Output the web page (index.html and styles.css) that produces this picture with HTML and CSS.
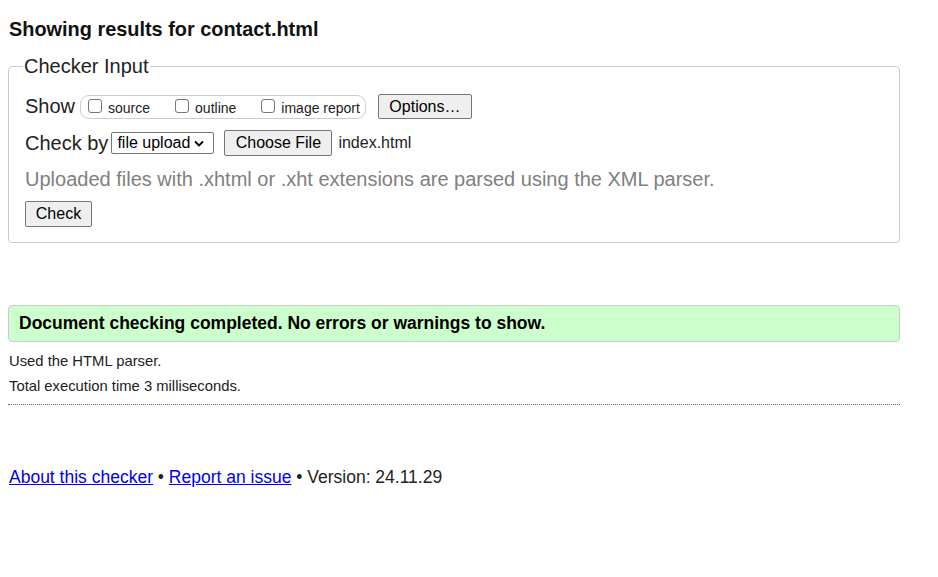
FILE: index.html
```html
<!DOCTYPE html>
<html>
<head>
<meta charset="utf-8">
<link rel="stylesheet" href="styles.css">
</head>
<body>
<div class="page">
  <h2 class="title">Showing results for contact.html</h2>
  <fieldset class="input">
    <legend class="legend">Checker Input</legend>
    <div class="row show-row">
      <span class="label">Show</span>
      <span class="group">
        <label class="opt"><span class="cb"></span>source</label>
        <label class="opt"><span class="cb"></span>outline</label>
        <label class="opt"><span class="cb"></span>image report</label>
      </span>
      <button class="btn btn-options">Options…</button>
    </div>
    <div class="row by-row">
      <span class="label">Check by</span>
      <span class="select">file upload<svg class="chev" width="10" height="7" viewBox="0 0 10 7"><path d="M1 1.5 L5 5.5 L9 1.5" fill="none" stroke="#000" stroke-width="1.8"/></svg></span>
      <button class="btn btn-file">Choose File</button>
      <span class="fname">index.html</span>
    </div>
    <p class="hint">Uploaded files with .xhtml or .xht extensions are parsed using the XML parser.</p>
    <button class="btn btn-check">Check</button>
  </fieldset>

  <div class="success">Document checking completed. No errors or warnings to show.</div>
  <p class="meta">Used the HTML parser.</p>
  <p class="meta">Total execution time 3 milliseconds.</p>
  <hr class="sep">

  <p class="footer"><a href="#">About this checker</a> • <a href="#">Report an issue</a> • Version: 24.11.29</p>
</div>
</body>
</html>
```
FILE: styles.css
```css
html, body {
  margin: 0;
  padding: 0;
  background: #fff;
}
body {
  font-family: "Liberation Sans", Arial, sans-serif;
  color: #222;
}
.page {
  width: 892px;
  padding: 0 8px;
}
.title {
  font-size: 19.9px;
  font-weight: bold;
  margin: 17px 0 0 1px;
  line-height: 24px;
  color: #111;
}
.input {
  margin: 13px 0 0 0;
  border: 1px solid #ccc;
  border-radius: 4px;
  padding: 10px 16px 15px 16px;
}
.legend {
  font-size: 20px;
  padding: 0 1px;
  margin-left: -2px;
  color: #222;
  line-height: 24px;
}
.row {
  display: flex;
  align-items: center;
}
.label {
  font-size: 20px;
  margin-right: 5px;
  color: #222;
}
.show-row {
  height: 26px;
  margin-top: 5px;
}
.group {
  display: flex;
  align-items: center;
  box-sizing: border-box;
  height: 24px;
  border: 1px solid #ccc;
  border-radius: 9px;
  padding: 0 5px 0 7px;
  margin-right: 12px;
  margin-top: 2px;
}
.opt {
  display: flex;
  align-items: flex-end;
  font-size: 14px;
  margin-right: 25px;
  color: #222;
}
.opt:last-child {
  margin-right: 0;
}
.cb {
  box-sizing: border-box;
  width: 14px;
  height: 14px;
  border: 1px solid #767676;
  border-radius: 3px;
  margin-right: 6px;
  margin-bottom: 3px;
  background: #fff;
}
.btn {
  font-family: "Liberation Sans", Arial, sans-serif;
  font-size: 16px;
  background: #efefef;
  border: 1px solid #767676;
  border-radius: 2px;
  color: #000;
  padding: 0 9px;
  height: 25px;
}
.btn-options {
  width: 94px;
  margin-top: 1px;
}
.by-row {
  margin-top: 11px;
  height: 26px;
}
.select {
  display: flex;
  align-items: center;
  box-sizing: border-box;
  width: 103px;
  font-size: 16px;
  border: 1px solid #767676;
  border-radius: 2px;
  height: 22px;
  padding: 0 3px 0 5px;
  margin-left: -2px;
  margin-right: 10px;
  color: #000;
  background: #fff;
}
.chev {
  margin-left: 4px;
}
.btn-file {
  width: 108px;
  height: 26px;
}
.fname {
  font-size: 16px;
  margin-left: 6px;
  margin-top: 0;
  color: #222;
}
.hint {
  font-size: 20px;
  color: #808080;
  margin: 11px 0 0 0;
  line-height: 24px;
}
.btn-check {
  margin-top: 10px;
  width: 67px;
  height: 26px;
}
.success {
  margin-top: 62px;
  background: #ccffcc;
  border: 1px solid #ccc;
  border-radius: 4px;
  height: 35px;
  line-height: 35px;
  padding-left: 10px;
  font-size: 17.5px;
  font-weight: bold;
  color: #000;
}
.meta {
  font-size: 14.8px;
  margin: 11px 0 0 1px;
  line-height: 16px;
  color: #222;
}
.meta + .meta {
  margin-top: 9px;
}
.sep {
  border: 0;
  border-top: 1px dotted #666;
  margin: 10px 0 0 0;
  height: 0;
}
.footer {
  font-size: 17.5px;
  margin: 61px 0 0 1px;
  line-height: 22px;
  color: #222;
}
.footer a {
  color: #0000ee;
}
```
